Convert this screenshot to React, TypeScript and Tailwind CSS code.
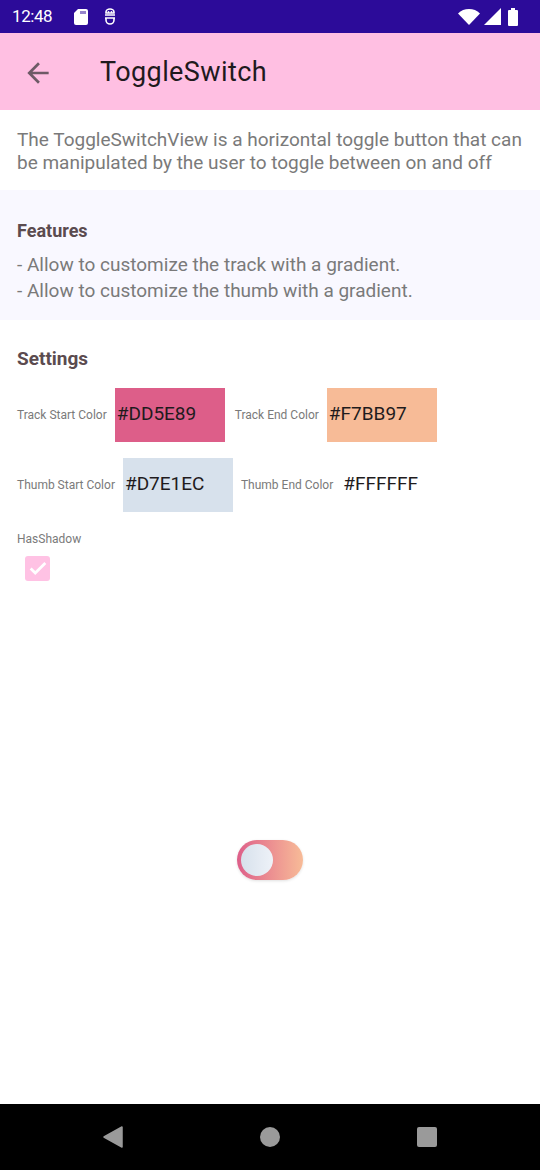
import React from 'react';

const ColorField = ({
  label,
  value,
  bg
}: {
  label: string;
  value: string;
  bg?: string;
}) => (
  <div className="flex items-center">
    <span className="text-[12px] text-[#7a7a7a] whitespace-nowrap">{label}</span>
    <div
      className="ml-2 w-[110px] h-[54px] flex items-center pl-[2px] text-[19px] text-[#1f1b1d]"
      style={{ backgroundColor: bg }}
    >
      {value}
    </div>
  </div>
);

export default function App() {
  return (
    <div className="w-[540px] h-[1170px] flex flex-col bg-white font-['Roboto',sans-serif] overflow-hidden">
      {/* status bar */}
      <div className="h-[33px] bg-[#2c0b99] flex items-center px-[12px] text-white">
        <span className="text-[17px] tracking-tight">12:48</span>
        <svg className="ml-[22px]" width="14" height="16" viewBox="0 0 14 16">
          <path d="M4 0h8a2 2 0 0 1 2 2v12a2 2 0 0 1-2 2H2a2 2 0 0 1-2-2V4z" fill="white" />
          <path d="M7 2v3M9 2v3M11 2v3" stroke="#2c0b99" strokeWidth="1" />
        </svg>
        <svg className="ml-[15px]" width="14" height="17" viewBox="0 0 14 17">
          <path d="M3 4a4 3 0 0 1 8 0v1H3zM2 7h10M2 10h10M3 10v2a4 4 0 0 0 8 0v-2" stroke="white" strokeWidth="1.6" fill="none" />
          <circle cx="5.5" cy="4" r="0.9" fill="white" />
          <circle cx="8.5" cy="4" r="0.9" fill="white" />
        </svg>
        <div className="flex-1" />
        <svg width="22" height="16" viewBox="0 0 22 16">
          <path d="M0 4.5a16 16 0 0 1 22 0L11 16z" fill="white" />
        </svg>
        <svg className="ml-[4px]" width="17" height="17" viewBox="0 0 17 17">
          <path d="M17 0v17H0z" fill="white" />
        </svg>
        <svg className="ml-[7px]" width="10" height="18" viewBox="0 0 10 18">
          <path d="M3 0h4v2h2a1 1 0 0 1 1 1v14a1 1 0 0 1-1 1H1a1 1 0 0 1-1-1V3a1 1 0 0 1 1-1h2z" fill="white" />
        </svg>
        <div className="w-[10px]" />
      </div>

      {/* app bar */}
      <div className="h-[77px] bg-[#ffbfe2] flex items-center pt-[2px]">
        <svg className="ml-[22px]" width="32" height="32" viewBox="0 0 24 24">
          <path d="M20 11H7.83l5.59-5.59L12 4l-8 8 8 8 1.41-1.41L7.83 13H20v-2z" fill="#6e5a66" />
        </svg>
        <span className="ml-[46px] text-[27px] font-normal text-[#1f1a1d] tracking-[0.4px]">ToggleSwitch</span>
      </div>

      {/* description */}
      <div className="h-[80px] px-[17px] pt-[18px] text-[19px] leading-[23px] text-[#7a7a7a]">
        The ToggleSwitchView is a horizontal toggle button that can be manipulated by the user to toggle between on and off
      </div>

      {/* features */}
      <div className="h-[130px] bg-[#f9f8ff] px-[17px] pt-[27px]">
        <div className="text-[18px] font-bold text-[#5b4b4f]">Features</div>
        <div className="mt-[8px] text-[19px] leading-[26px] text-[#7a7a7a]">
          <div>- Allow to customize the track with a gradient.</div>
          <div>- Allow to customize the thumb with a gradient.</div>
        </div>
      </div>

      {/* settings */}
      <div className="px-[17px] pt-[25px]">
        <div className="text-[19px] font-bold text-[#5b4b4f]">Settings</div>
        <div className="mt-[14px] flex items-center gap-[8px]">
          <ColorField label="Track Start Color" value="#DD5E89" bg="#DD5E89" />
          <div className="ml-[2px]">
            <ColorField label="Track End Color" value="#F7BB97" bg="#F7BB97" />
          </div>
        </div>
        <div className="mt-[16px] flex items-center gap-[8px]">
          <ColorField label="Thumb Start Color" value="#D7E1EC" bg="#D7E1EC" />
          <ColorField label="Thumb End Color" value="#FFFFFF" />
        </div>
        <div className="mt-[18px] text-[12px] text-[#7a7a7a]">HasShadow</div>
        <div className="mt-[8px] ml-[8px] w-[25px] h-[25px] rounded-[3px] bg-[#ffc2e4] flex items-center justify-center">
          <svg width="22" height="22" viewBox="0 0 24 24">
            <path d="M4 12.5l5 5L20 6.5" stroke="white" strokeWidth="3" fill="none" />
          </svg>
        </div>
      </div>

      {/* toggle */}
      <div className="flex-1 flex items-center justify-center pt-[36px]">
        <div className="w-[66px] h-[40px] rounded-full bg-gradient-to-r from-[#dd5e89] to-[#f7bb97] flex items-center pl-[4px] shadow-[0_1px_3px_rgba(0,0,0,0.12)]">
          <div className="w-[32px] h-[32px] rounded-full bg-gradient-to-r from-[#d7e1ec] to-[#eef2f8]" />
        </div>
      </div>

      {/* nav bar */}
      <div className="h-[66px] bg-black flex items-center justify-center gap-[137px]">
        <svg width="20" height="22" viewBox="0 0 20 22">
          <path d="M19 1v20L1 11z" fill="#9a9a9a" strokeLinejoin="round" stroke="#9a9a9a" strokeWidth="1.5" />
        </svg>
        <div className="w-[20px] h-[20px] rounded-full bg-[#9a9a9a]" />
        <div className="w-[20px] h-[20px] rounded-[2px] bg-[#9a9a9a]" />
      </div>
    </div>
  );
}
